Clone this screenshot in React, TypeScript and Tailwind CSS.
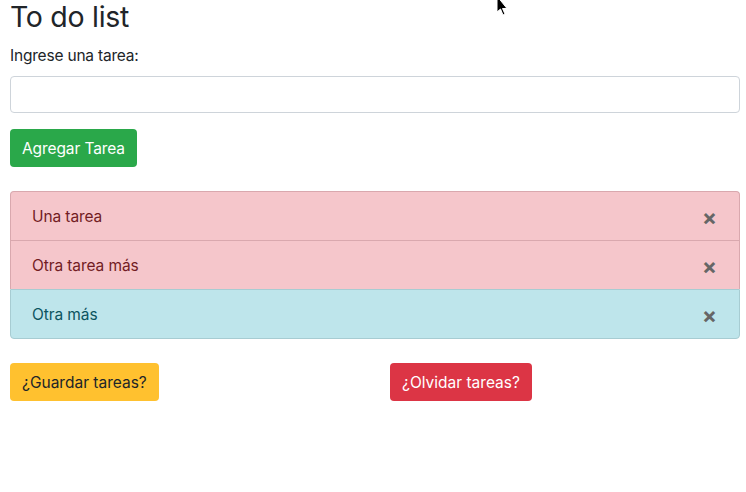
import React from "react";

const font = { fontFamily: "Inter, 'Noto Sans', sans-serif" };

function Item({ text, kind, last, first }: { text: string; kind: "danger" | "info"; last?: boolean; first?: boolean }) {
  const cls =
    kind === "danger"
      ? "bg-[#f5c6cb] text-[#721c24] border-[#d9a8ae]"
      : "bg-[#bee5eb] text-[#0c5460] border-[#a7ccd2]";
  return (
    <div
      className={`flex items-center justify-between pl-[21px] pr-[22px] border-x border-t ${cls} ${
        first ? "rounded-t-[4px]" : ""
      } ${last ? "h-[50px] border-b rounded-b-[4px]" : "h-[49px]"}`}
    >
      <span className="pt-[2px] text-[15.5px] leading-6 tracking-[-0.1px]">{text}</span>
      <span className="pt-[2px] text-[22px] font-bold leading-none text-[#666]">×</span>
    </div>
  );
}

export default function App() {
  return (
    <div className="relative w-[746px] h-[492px] bg-white text-[#212529] pl-[10px] pr-[6px]" style={font}>
      <h1 className="text-[28.5px] leading-[33px] font-normal tracking-[-0.3px] text-[#212529]">To do list</h1>
      <label className="block mt-[11px] text-[15.5px] leading-6 tracking-[-0.2px]">Ingrese una tarea:</label>
      <input className="block mt-[8px] w-full h-[37px] border border-[#ced4da] rounded-[4px] px-3 outline-none" />
      <button className="mt-[16px] h-[38px] pt-[2px] px-[12px] rounded-[4px] bg-[#2aa84a] text-white text-[15.5px] leading-6 tracking-[-0.1px]">
        Agregar Tarea
      </button>
      <div className="mt-[24px] flex flex-col">
        <Item text="Una tarea" kind="danger" first />
        <Item text="Otra tarea más" kind="danger" />
        <Item text="Otra más" kind="info" last />
      </div>
      <div className="mt-[24px] grid grid-cols-2 gap-[30px]">
        <div>
          <button className="h-[38px] pt-[2px] px-[12px] rounded-[4px] bg-[#ffc12f] text-[#212529] text-[15.5px] leading-6">
            ¿Guardar tareas?
          </button>
        </div>
        <div>
          <button className="h-[38px] pt-[2px] px-[12px] rounded-[4px] bg-[#dc3545] text-white text-[15.5px] leading-6">
            ¿Olvidar tareas?
          </button>
        </div>
      </div>
      <svg className="absolute left-[496px] top-0" width="12" height="18" viewBox="0 0 12 18">
        <path d="M1 -4 L1 12 L4.5 9 L7 15 L9 14 L6.5 8.5 L11 8.5 Z" fill="#000" stroke="#fff" strokeWidth="1" />
      </svg>
    </div>
  );
}
